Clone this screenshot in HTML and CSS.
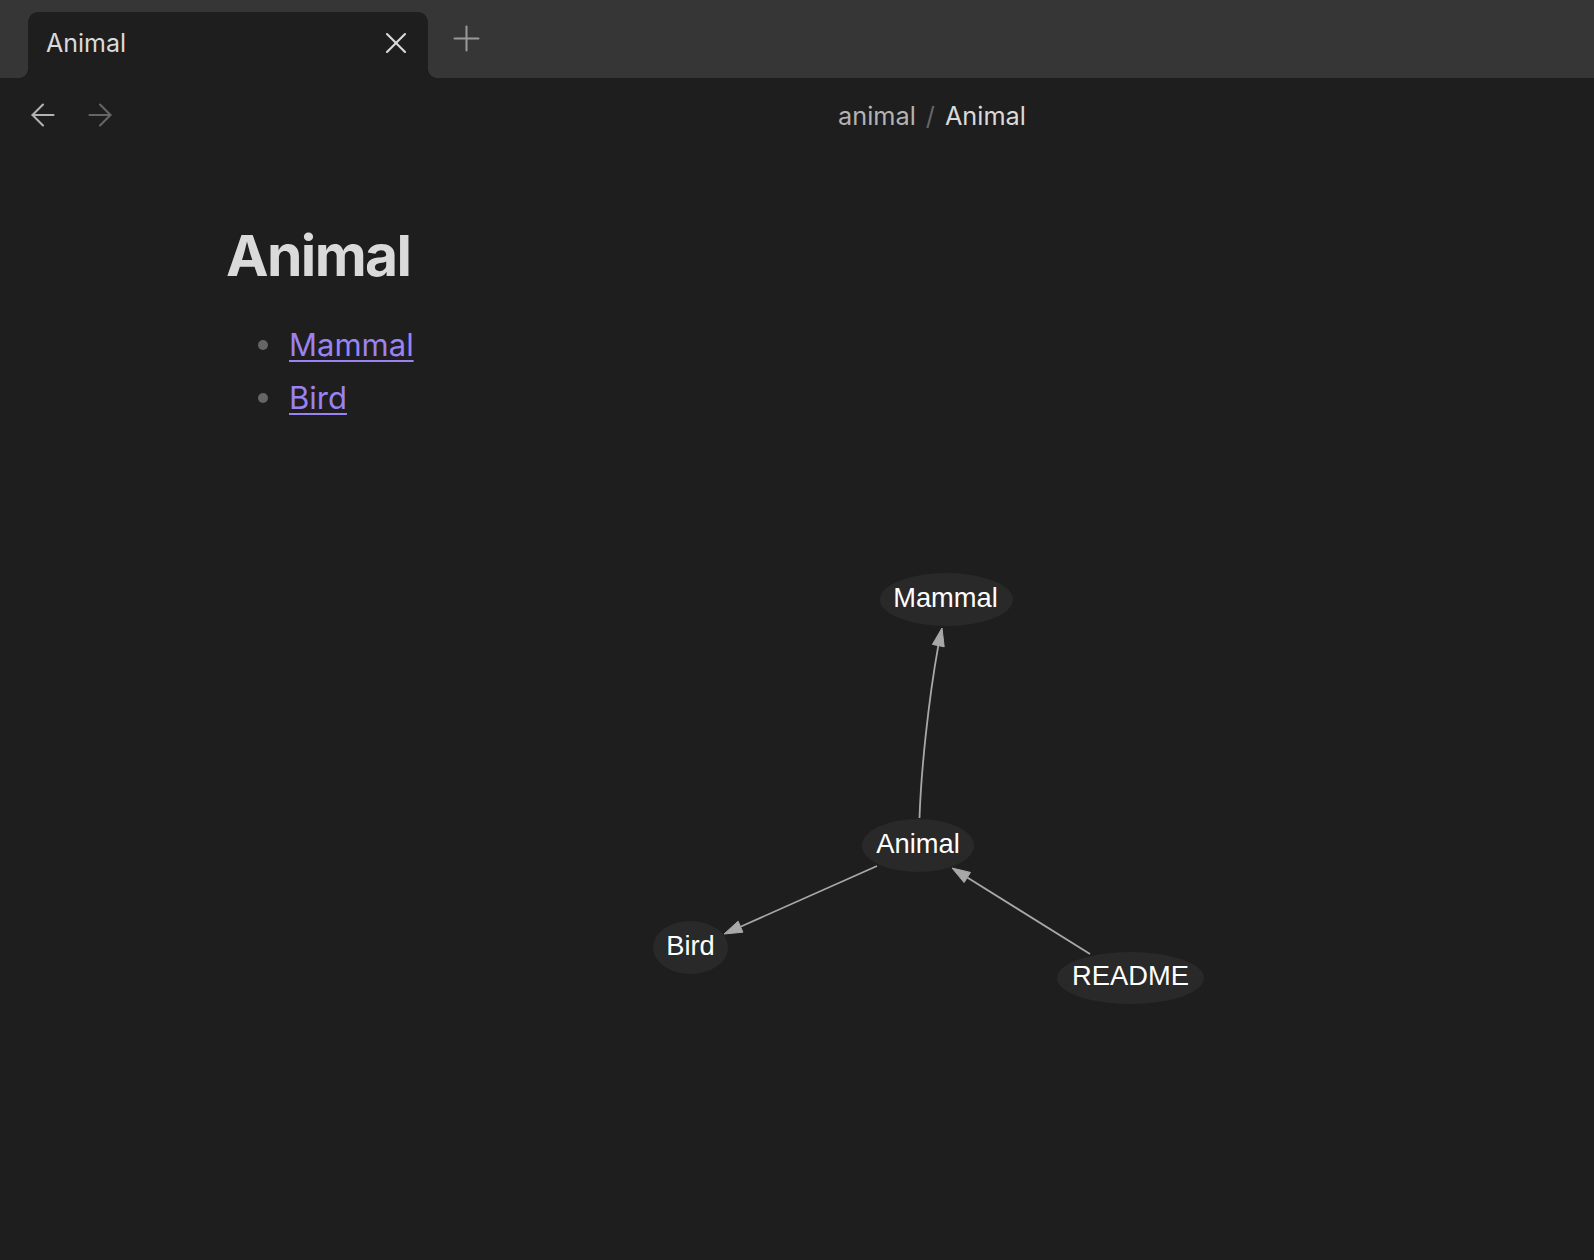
FILE: index.html
```html
<!DOCTYPE html>
<html lang="en">
<head>
<meta charset="utf-8">
<title>Animal</title>
<link rel="stylesheet" href="styles.css">
</head>
<body>
<div class="app">
  <div class="tabbar">
    <div class="tab">
      <span class="tab-title">Animal</span>
      <svg class="tab-close" viewBox="0 0 24 24" width="36" height="36"><path d="M18 6 6 18"/><path d="m6 6 12 12"/></svg>
    </div>
    <div class="new-tab">
      <svg viewBox="0 0 24 24" width="41" height="41"><path d="M5 12h14"/><path d="M12 5v14"/></svg>
    </div>
  </div>
  <div class="view">
    <div class="view-header">
      <div class="nav">
        <svg class="nav-back" viewBox="0 0 24 24" width="36" height="36"><path d="M19 12H5"/><path d="m12 19-7-7 7-7"/></svg>
        <svg class="nav-fwd" viewBox="0 0 24 24" width="36" height="36"><path d="M5 12h14"/><path d="m12 5 7 7-7 7"/></svg>
      </div>
      <div class="breadcrumb">
        <span class="crumb-parent">animal</span>
        <span class="crumb-sep">/</span>
        <span class="crumb-current">Animal</span>
      </div>
    </div>
    <div class="content">
      <h1 class="note-title">Animal</h1>
      <ul class="links">
        <li><a href="#">Mammal</a></li>
        <li><a href="#">Bird</a></li>
      </ul>
      <svg class="graph" viewBox="630 555 600 465" width="600" height="465">
        <g class="nodes">
          <ellipse cx="946.5" cy="598.5" rx="66.5" ry="26.5"/>
          <ellipse cx="918" cy="844.5" rx="56" ry="26.5"/>
          <ellipse cx="690.5" cy="946.5" rx="37.5" ry="26.5"/>
          <ellipse cx="1130.5" cy="977" rx="73.5" ry="26"/>
        </g>
        <g class="edges">
          <path d="M919.5 817 C921 772 928 702 938.3 644.6"/>
          <polygon points="942,627 944.2,645.8 932.4,643.4"/>
          <path d="M877 865 L740.5 925.7"/>
          <polygon points="724,933 742.9,931.2 738.1,920.2"/>
          <path d="M1090 953 L967.3 876.5"/>
          <polygon points="952,867 970.5,871.4 964.1,881.6"/>
        </g>
        <g class="labels">
          <text x="945.5" y="606">Mammal</text>
          <text x="918" y="852">Animal</text>
          <text x="690.5" y="954">Bird</text>
          <text x="1130.5" y="984">README</text>
        </g>
      </svg>
    </div>
  </div>
</div>
</body>
</html>
```

FILE: styles.css
```css
html, body {
  margin: 0;
  padding: 0;
  background: #1e1e1e;
  overflow: hidden;
}

body {
  font-family: Inter, "Noto Sans", sans-serif;
  color: #dadada;
}

.app {
  width: 1594px;
  height: 1260px;
  display: flex;
  flex-direction: column;
}

/* Tab bar */
.tabbar {
  height: 78px;
  background: #363636;
  display: flex;
  align-items: flex-end;
  padding-left: 28px;
  box-sizing: border-box;
}

.tab {
  position: relative;
  width: 400px;
  height: 66px;
  background: #1e1e1e;
  border-radius: 10px 10px 0 0;
  display: flex;
  align-items: center;
  justify-content: space-between;
  padding: 0 14px 0 18px;
  box-sizing: border-box;
}

.tab::before,
.tab::after {
  content: "";
  position: absolute;
  bottom: 0;
  width: 9px;
  height: 9px;
}

.tab::before {
  left: -9px;
  background: radial-gradient(circle at 0 0, #363636 8.5px, #1e1e1e 9px);
}

.tab::after {
  right: -9px;
  background: radial-gradient(circle at 100% 0, #363636 8.5px, #1e1e1e 9px);
}

.tab-title {
  font-size: 25px;
  color: #dadada;
  padding-bottom: 4px;
}

.tab-close {
  fill: none;
  stroke: #dadada;
  stroke-width: 1.4;
  stroke-linecap: round;
  margin-bottom: 4px;
}

.new-tab {
  align-self: flex-start;
  margin-top: 18px;
  margin-left: 18px;
  display: flex;
}

.new-tab svg {
  fill: none;
  stroke: #999;
  stroke-width: 1.2;
  stroke-linecap: round;
}

/* View header */
.view {
  flex: 1;
  display: flex;
  flex-direction: column;
}

.view-header {
  height: 78px;
  display: flex;
  align-items: center;
  padding-left: 25px;
}

.nav {
  display: flex;
  gap: 21px;
  padding-bottom: 4px;
}

.nav svg {
  fill: none;
  stroke-width: 1.4;
  stroke-linecap: round;
  stroke-linejoin: round;
}

.nav-back { stroke: #b3b3b3; }
.nav-fwd { stroke: #666; }

.breadcrumb {
  margin-left: 720px;
  font-size: 25.3px;
  display: flex;
  gap: 10px;
  padding-bottom: 3px;
}

.crumb-parent { color: #b3b3b3; }
.crumb-sep { color: #666; }
.crumb-current { color: #dadada; }

/* Content */
.content {
  padding-left: 226px;
  display: flex;
  flex-direction: column;
  align-items: flex-start;
}

.note-title {
  margin: 66px 0 0 0;
  font-size: 57px;
  line-height: 1.2;
  font-weight: 700;
  letter-spacing: -1.6px;
  color: #dadada;
}

.links {
  list-style: none;
  margin: 28px 0 0 0;
  padding: 0;
  font-size: 31px;
  line-height: 53px;
}

.links li {
  display: flex;
  align-items: center;
}

.links li::before {
  content: "";
  width: 10px;
  height: 10px;
  border-radius: 50%;
  background: #666;
  margin-left: 32px;
  margin-right: 21px;
}

.links a {
  color: #9b82f2;
  text-decoration: underline;
  text-decoration-thickness: 2px;
  text-underline-offset: 4px;
}

.graph {
  display: block;
  margin-left: 404px;
  margin-top: 132px;
}

.graph .nodes ellipse {
  fill: #292929;
}

.graph .edges path {
  fill: none;
  stroke: #a8a8a8;
  stroke-width: 1.8;
}

.graph .edges polygon {
  fill: #a8a8a8;
  stroke: #a8a8a8;
  stroke-width: 1;
}

.graph .labels text {
  font-family: "Liberation Sans", Arial, sans-serif;
  font-size: 27.3px;
  fill: #ffffff;
  text-anchor: middle;
}
```
